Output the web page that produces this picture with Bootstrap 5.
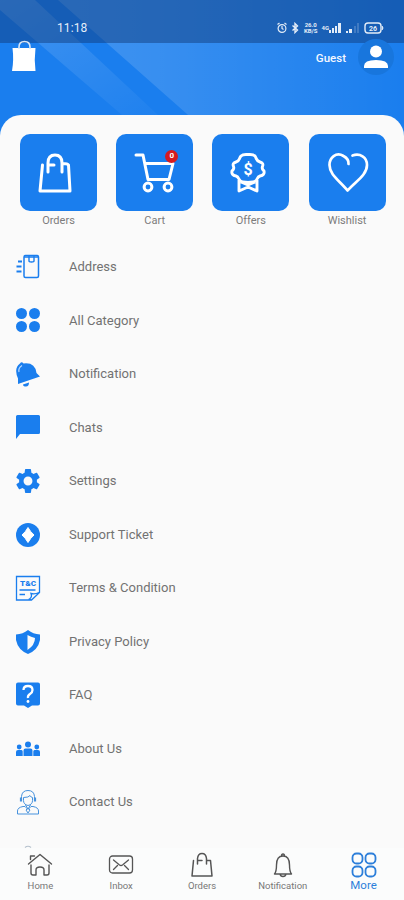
<!DOCTYPE html>
<html lang="en">
<head>
<meta charset="utf-8">
<meta name="viewport" content="width=device-width, initial-scale=1">
<title>More</title>
<link href="https://cdn.jsdelivr.net/npm/bootstrap@5.3.0/dist/css/bootstrap.min.css" rel="stylesheet">
<style>
:root{--brand:#1a7eee}
body{font-family:Roboto,"Noto Sans",sans-serif;background:#fafafa;color:#666}
svg{display:block;flex:none}
.phone{height:900px;background:#fafafa}
.hero{height:136px;background:var(--brand)}
.hero-art{position:absolute;left:0;top:0}
.statusbar{height:43px;background:rgba(15,55,115,.46);color:#e4edf8;padding:12px 20px 0 57px}
.clock{font-size:12px;letter-spacing:.1px}
.tiny-stack{font-size:6px;line-height:6px;font-weight:700;text-align:center}
.topbar{height:72px;padding:0 10px 0 11px}
.bag-logo{margin-top:-3px}
.guest{font-size:11.5px;font-weight:500;color:#f4f8ff;margin:8px 12px 0 0}
.avatar{width:36px;height:36px;background:#1876dd;margin-top:-4px}
.sheet{margin-top:-21px;background:#fafafa;border-radius:21px 21px 0 0;padding:19px 19px 0 20px}
.tiles{gap:19.2px}
.tile{width:77px;height:77px;border-radius:10px;background:var(--brand)}
.tile-label{font-size:11px;line-height:14px;margin-top:3px;color:#7c7c7c}
.count{position:absolute;left:49px;top:15.5px;width:13px;height:13px;background:#d51b20;color:#fff;font-size:8px;font-weight:700}
.menu{margin-top:12px;height:608px}
.menu-row{height:53.55px;padding-left:15px;font-size:13px;color:#727272}
.menu-row svg{width:26px;height:26px;margin-right:28px;color:var(--brand)}
.tabs{height:54px;background:#fbfcfc;font-size:9.5px;color:#777}
.tab-item{width:80.8px;padding-top:4px}
.tab-item svg{color:#555}
.tab-text{line-height:12px;margin-top:2px}
.tab-item.current,.tab-item.current svg{color:#2d7fda}
.tab-item.current .tab-text{font-size:11.5px;margin-top:1px}
</style>
<script src="https://cdn.jsdelivr.net/npm/bootstrap@5.3.0/dist/js/bootstrap.bundle.min.js"></script>
</head>
<body>
<div class="phone d-flex flex-column overflow-hidden position-relative">
  <header class="hero position-relative flex-shrink-0">
    <svg class="hero-art" width="404" height="136" viewBox="0 0 404 136">
      <defs>
        <linearGradient id="g1"><stop offset="0" stop-color="#fff" stop-opacity=".16"/><stop offset=".3" stop-color="#fff" stop-opacity=".13"/><stop offset="1" stop-color="#fff" stop-opacity="0"/></linearGradient>
        <linearGradient id="g2" x1="0" y1="0" x2=".9" y2="1"><stop offset="0" stop-color="#fff" stop-opacity=".17"/><stop offset="1" stop-color="#fff" stop-opacity=".03"/></linearGradient>
      </defs>
      <path d="M0 0H35L158 115H122L0 10Z" fill="url(#g2)"/>
      <path d="M58 0H404V136H210L187 114Z" fill="url(#g1)"/>
    </svg>
    <div class="position-relative">
      <div class="statusbar d-flex align-items-center">
        <span class="clock me-auto">11:18</span>
        <svg width="10" height="12" viewBox="0 0 10 12" fill="none" stroke="currentColor" stroke-width="1.2"><circle cx="5" cy="6.5" r="3.9"/><path d="M5 4v2.5l1.5 1M.5 2.5l2-1.5M9.500 2.500l-2-1.500"/></svg>
        <svg class="ms-1" width="9" height="12" viewBox="0 0 9 12" fill="none" stroke="currentColor" stroke-width="1.4"><path d="M1.500 3.500l5 4.500-2.500 2.500v-9l2.500 2.500-5 4.500"/></svg>
        <span class="tiny-stack ms-1">26.0<br>KB/S</span>
        <span class="tiny-stack ms-1">4G</span>
        <svg width="13" height="10" viewBox="0 0 13 10" fill="currentColor"><path d="M0 7h2v3H0zM3 5h2v5H3zM6 3h2v7H6zM9 0h3v10H9z"/></svg>
        <svg class="ms-1" width="14" height="10" viewBox="0 0 14 10" fill="currentColor"><path d="M0 8h2v2H0zM3 6h3v4H3z"/><path d="M8 3h2v7H8zM11 0h2v10h-2z" opacity=".2"/></svg>
        <svg class="ms-1" width="20" height="12" viewBox="0 0 20 12"><rect x="1" y="1" width="16" height="10" rx="3" fill="none" stroke="currentColor" stroke-width="1.4"/><path d="M18 4q2 2 0 4" fill="currentColor" stroke="currentColor"/><text x="9" y="8.500" font-size="7" font-weight="700" text-anchor="middle" fill="currentColor">26</text></svg>
      </div>
      <div class="topbar d-flex align-items-start">
        <svg class="bag-logo me-auto" width="26" height="32" viewBox="0 0 26 32"><path d="M1.500 8h23q-1.500 12 0 23H1q2-11 .5-23z" fill="#fff"/><path d="M8 9V7q0-5.500 5.500-5.500T19 7v2" fill="none" stroke="#d9e6f5" stroke-width="1.600"/></svg>
        <span class="guest lh-sm">Guest</span>
        <span class="avatar rounded-circle d-flex align-items-center justify-content-center"><svg width="24" height="24" viewBox="0 0 24 24" fill="#fff"><circle cx="12" cy="6.500" r="6"/><path d="M0 23v-2q0-6 12-6t12 6v2z"/></svg></span>
      </div>
    </div>
  </header>
  <main class="sheet position-relative flex-shrink-0">
    <div class="tiles d-flex text-center">
      <div><div class="tile"><svg width="77" height="77" fill="none" stroke="#fff" stroke-width="3" stroke-linejoin="round" stroke-linecap="round"><path d="M22.500 31l-2.500 26h30l-1.500-26q-1-1.500-6-1.500M28 38V29q0-8 7-8t7 8v9M28 31h6"/></svg></div><div class="tile-label">Orders</div></div>
      <div><div class="tile position-relative"><svg width="77" height="77" fill="none" stroke="#fff" stroke-width="3" stroke-linejoin="round" stroke-linecap="round"><path d="M20 21h7l5 24.500h21l4-16H29"/><circle cx="32" cy="53" r="3.900"/><circle cx="52" cy="53" r="3.900"/></svg><span class="count rounded-circle d-flex align-items-center justify-content-center">0</span></div><div class="tile-label">Cart</div></div>
      <div><div class="tile"><svg width="77" height="77" fill="none" stroke="#fff" stroke-width="2.900" stroke-linejoin="round"><path d="M36 20.500C39 20.500 41 20 43 22C45 25 44 27 48 28Q52 29 50.500 32.500Q49.500 35 52 37Q53 41 48 42C44 43 46 48 41 48Q38 48 36 48.500Q34 48 31 48C26 48 28 43 24 42Q19 41 20 37Q22.500 35 21.500 32.500Q20 29 24 28C28 27 26.500 25 29 22C31 20 33 20.500 36 20.500Z"/><path d="M27 46v11l9-4 9 4V46M29 48l7 3 7-3"/><text x="36" y="40.500" text-anchor="middle" fill="#fff" stroke="none" font-size="16" font-weight="700">$</text></svg></div><div class="tile-label">Offers</div></div>
      <div><div class="tile"><svg width="77" height="77" fill="none" stroke="#fff" stroke-width="2.700" stroke-linejoin="round" stroke-linecap="round"><path d="M39.500 30Q40 25 34.500 22C27 17.500 20.500 24 20.500 31C20.500 41 31 47 38.500 56.500C47 47 58 41 58 31C58 23 51 19 43.500 21.500"/></svg></div><div class="tile-label">Wishlist</div></div>
    </div>
  </main>
  <nav class="menu flex-shrink-0 overflow-hidden">
    <div class="menu-row d-flex align-items-center"><svg viewBox="0 0 26 26" fill="none" stroke="currentColor"><rect x="9" y="1.500" width="14.500" height="22" rx="1.500" stroke-width="1.500"/><path d="M9 3h15M14 2v5q0 1 2.500 1T19 7V2" stroke-width="1.400"/><path d="M3 7.500h4M1.500 12.500h5M1.500 17.500h5" stroke-width="2"/></svg>Address</div>
    <div class="menu-row d-flex align-items-center"><svg viewBox="0 0 26 26" fill="currentColor"><circle cx="6.500" cy="6.500" r="5.500"/><circle cx="19.500" cy="6.500" r="5.500"/><circle cx="6.500" cy="19.500" r="5.500"/><circle cx="19.500" cy="19.500" r="5.500"/></svg>All Category</div>
    <div class="menu-row d-flex align-items-center"><svg viewBox="0 0 26 26" fill="currentColor"><path d="M5 2.500Q6.500 0 8.500 2.500Q20 1 21.500 12L25 15.500L3 23V17.500Q-1.500 7 5 2.500ZM8 23.500l6-2q0 4-3 4t-3-2Z"/><path d="M7 4.500Q3 7 4 11" fill="none" stroke="#b9d9ff" stroke-width="1.200"/></svg>Notification</div>
    <div class="menu-row d-flex align-items-center"><svg viewBox="0 0 26 26" fill="currentColor"><path d="M1 2.500Q1 1 2.500 1h21Q25 1 25 2.500v16q0 1.500-1.500 1.500H5l-4 5z"/></svg>Chats</div>
    <div class="menu-row d-flex align-items-center"><svg viewBox="1.500 1.500 21 21" fill="currentColor"><path d="M19.140 12.940c.04-.3.06-.61.06-.94 0-.32-.02-.64-.07-.94l2.030-1.580a.49.49 0 0 0 .12-.61l-1.920-3.320a.49.49 0 0 0-.59-.22l-2.390.96a7 7 0 0 0-1.620-.94l-.36-2.540A.48.48 0 0 0 13.920 2.400h-3.840a.48.48 0 0 0-.47.41l-.36 2.540c-.59.24-1.130.57-1.620.94l-2.390-.96a.49.49 0 0 0-.59.22L2.730 8.870a.48.48 0 0 0 .12.610l2.030 1.580a6 6 0 0 0 0 1.880l-2.030 1.580a.49.49 0 0 0-.12.610l1.920 3.320c.12.220.37.290.59.220l2.390-.96c.5.380 1.030.7 1.620.94l.36 2.540c.05.240.24.410.47.410h3.840c.24 0 .44-.17.47-.41l.36-2.540a7 7 0 0 0 1.620-.94l2.390.96c.22.080.47 0 .59-.22l1.920-3.320a.49.49 0 0 0-.12-.61zM12 15.600a3.600 3.600 0 1 1 0-7.200 3.600 3.600 0 0 1 0 7.200z"/></svg>Settings</div>
    <div class="menu-row d-flex align-items-center"><svg viewBox="0 0 26 26"><circle cx="13" cy="13" r="12" fill="currentColor"/><path d="M13 5.500q2.500 4.500 6 7.500-3.500 3-6 7.500-2.500-4.500-6-7.500 3.500-3 6-7.500z" fill="#fff" stroke="#fff" stroke-linejoin="round"/></svg>Support Ticket</div>
    <div class="menu-row d-flex align-items-center"><svg viewBox="0 0 26 26" fill="none" stroke="currentColor" stroke-width="1.300"><path d="M1.500 1.500h23v16l-8 7.500h-15zM16.500 25l-2-1q3-2 1.500-5.500 4 1 8-1M4.500 15h16M4.500 19.500H10"/><text x="13" y="11" font-size="8" font-weight="900" text-anchor="middle" textLength="16" lengthAdjust="spacingAndGlyphs" fill="currentColor" stroke="none">T&amp;C</text></svg>Terms &amp; Condition</div>
    <div class="menu-row d-flex align-items-center"><svg viewBox="0 0 26 26"><path d="M13 1Q18 5 25 5.500V11Q23 21 13 25Q3 21 1 11V5.500Q8 5 13 1z" fill="currentColor"/><path d="M12.500 6Q16 8 20 9q0 7-7.500 12z" fill="#fafafa"/></svg>Privacy Policy</div>
    <div class="menu-row d-flex align-items-center"><svg viewBox="0 0 26 26"><path d="M3 .5h20q2 0 2 2v19q0 2-2 2h-6L13 26l-4-2.500H3q-2 0-2-2v-19q0-2 2-2z" fill="currentColor"/><path d="M8.500 8q0-4 4.500-4t4.500 4q0 2.500-2.500 4t-2 4" fill="none" stroke="#fff" stroke-width="2.300"/><circle cx="13" cy="19.500" r="1.400" fill="#fff"/></svg>FAQ</div>
    <div class="menu-row d-flex align-items-center"><svg viewBox="0 0 26 26" fill="currentColor"><circle cx="13" cy="8.500" r="3"/><circle cx="4.200" cy="11" r="2.400"/><circle cx="21.800" cy="11" r="2.400"/><path d="M8.500 20v-5.500q0-2 2-2h5q2 0 2 2V20zM1 20v-4q0-2 2-2h3.500q1.200 0 1.200 1.500V20zM18.300 20v-4.500q0-1.500 1.200-1.500H23q2 0 2 2v4z"/></svg>About Us</div>
    <div class="menu-row d-flex align-items-center"><svg viewBox="0 0 26 26" fill="none" stroke="#4792dd" stroke-width="1"><path d="M6.500 12V7.500Q7 1.500 13 1.500t6.500 6V12M8.500 8.500Q14 8.500 15 6.500q1 2 2.500 2v3q0 4-4.500 5-4.500-1-4.500-5zM10.500 16l2.500 4 2.500-4M2.500 25v-3q0-3.500 5.500-4.500h2l3 3 3-3h2q5.500 1 5.500 4.500v3zM11 21l2-2 2 2-2 3z"/><path d="M6 8.500v4M20 8.500v4" stroke-width="2.200"/></svg>Contact Us</div>
    <div class="menu-row d-flex align-items-start"><svg viewBox="0 0 26 26" fill="none" stroke="#b5c1cd" stroke-width="1.200"><path d="M10 18.500q3-2.500 6 0"/></svg></div>
  </nav>
  <footer class="tabs d-flex text-center flex-shrink-0">
    <div class="tab-item"><svg class="mx-auto" width="26" height="26" viewBox="0 0 26 26" fill="none" stroke="currentColor" stroke-width="1.400" stroke-linecap="round" stroke-linejoin="round"><path d="M1.500 12L13 2.500l11.500 9.500M3.500 7.500V4h4M4 13v8q0 2 2 2h3v-5q0-3 4-3t4 3v5h3q2 0 2-2v-8"/></svg><div class="tab-text">Home</div></div>
    <div class="tab-item"><svg class="mx-auto" width="26" height="26" viewBox="0 0 26 26" fill="none" stroke="currentColor" stroke-width="1.300" stroke-linecap="round"><rect x="1.500" y="4" width="23" height="17" rx="3"/><path d="M5.500 8l6 5q1.500 1 3 0l6-5M5.500 17.500l4-4M20.500 17.500l-4-4"/></svg><div class="tab-text">Inbox</div></div>
    <div class="tab-item"><svg class="mx-auto" width="26" height="26" viewBox="0 0 26 26" fill="none" stroke="currentColor" stroke-width="1.500" stroke-linecap="round" stroke-linejoin="round"><path d="M4.500 8.500L3 24h20L21.500 8.500H18M8.500 12V6.500Q9 1.500 13 1.500t4.500 5V12M8.500 8.500H13"/></svg><div class="tab-text">Orders</div></div>
    <div class="tab-item"><svg class="mx-auto" width="26" height="26" viewBox="0 0 26 26" fill="none" stroke="currentColor" stroke-width="1.400" stroke-linejoin="round"><path d="M4.500 22q2-2.500 2-9 0-9 6.500-9t6.500 9q0 6.500 2 9zM11.500 4q0-2 1.500-2t1.500 2M10 22q.5 2.500 3 2.500t3-2.500"/></svg><div class="tab-text">Notification</div></div>
    <div class="tab-item current"><svg class="mx-auto" width="26" height="26" viewBox="0 0 26 26" fill="none" stroke="currentColor" stroke-width="1.800"><rect x="1.500" y="1.500" width="10" height="10" rx="4"/><rect x="14.500" y="1.500" width="10" height="10" rx="4"/><rect x="1.500" y="14.500" width="10" height="10" rx="4"/><rect x="14.500" y="14.500" width="10" height="10" rx="4"/></svg><div class="tab-text">More</div></div>
  </footer>
</div>
</body>
</html>
